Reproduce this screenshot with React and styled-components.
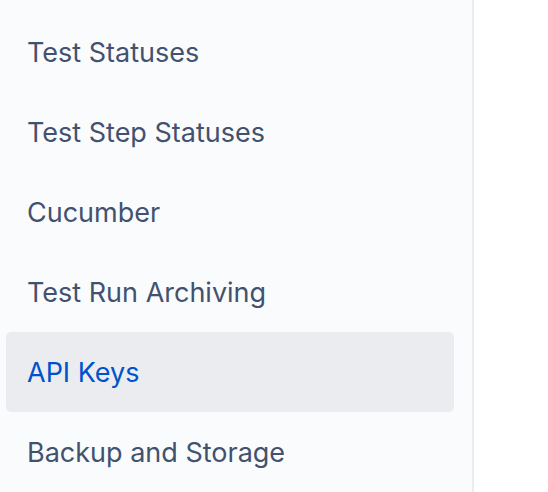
import React from 'react';
import styled, { createGlobalStyle } from 'styled-components';

const GlobalStyle = createGlobalStyle`
    html, body {
        margin: 0;
        padding: 0;
        background: #ffffff;
    }
    body {
        font-family: "Inter", "Liberation Sans", sans-serif;
    }
`;

const items = [
    'Test Statuses',
    'Test Step Statuses',
    'Cucumber',
    'Test Run Archiving',
    'API Keys',
    'Backup and Storage',
];

function App() {
    const selected = 'API Keys';

    return (
        <>
            <GlobalStyle />
            <Page>
                <Sidebar>
                    {items.map((item) => (
                        <NavItem key={item} active={item === selected ? 1 : 0}>
                            {item}
                        </NavItem>
                    ))}
                </Sidebar>
                <Content />
            </Page>
        </>
    );
}

export default App;

const Page = styled.div`
    display: flex;
    height: 492px;
    overflow: hidden;
`;

const Sidebar = styled.nav`
    width: 474px;
    flex-shrink: 0;
    box-sizing: border-box;
    padding: 12px 18px 0 6px;
    background: #fafbfc;
    border-right: 2px solid #ebecf0;
    display: flex;
    flex-direction: column;
`;

const NavItem = styled.a`
    display: flex;
    align-items: center;
    height: 80px;
    flex-shrink: 0;
    padding-left: 21px;
    border-radius: 5px;
    font-size: 27px;
    color: ${(p) => (p.active ? '#0052cc' : '#42526e')};
    background: ${(p) => (p.active ? '#ebecf0' : 'transparent')};
    cursor: pointer;
`;

const Content = styled.main`
    flex: 1;
    background: #ffffff;
`;
